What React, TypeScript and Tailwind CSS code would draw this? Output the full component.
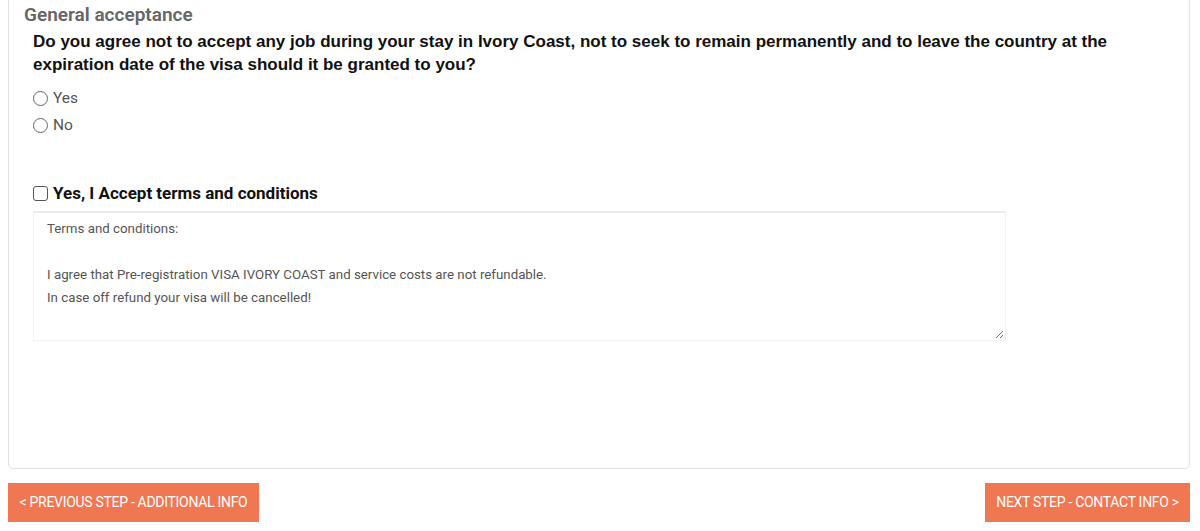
import React from "react";

function Radio({ label }: { label: string }) {
  return (
    <div className="flex items-center h-[27px]">
      <span className="w-[15px] h-[15px] rounded-full border border-[#666] bg-white" />
      <span className="ml-[5px] text-[15.5px] text-[#555] leading-none">{label}</span>
    </div>
  );
}

export default function App() {
  return (
    <div className="w-[1200px] h-[531px] overflow-hidden bg-white" style={{ fontFamily: "Roboto, 'Liberation Sans', sans-serif" }}>
      <div className="pl-2 pr-[10px]">
        <div className="-mt-[10px] border border-[#dde3e6] rounded-[5px] h-[479px] px-[15px] pt-[12px]">
          <div className="text-[19px] leading-[24px] font-semibold text-[#666]">General acceptance</div>
          <div className="pl-[9px]">
            <div
              className="mt-[3px] text-[17px] leading-[23px] font-bold text-[#111] pr-[60px]"
              style={{ fontFamily: "'Liberation Sans', Arial, sans-serif" }}
            >
              Do you agree not to accept any job during your stay in Ivory Coast, not to seek to remain permanently and to leave the country at the expiration date of the visa should it be granted to you?
            </div>
            <div className="mt-[9px]">
              <Radio label="Yes" />
              <Radio label="No" />
            </div>
            <div className="mt-[44px] flex items-center h-[20px]">
              <span className="w-[15px] h-[15px] rounded-[3px] border border-[#555] bg-white" />
              <span className="ml-[5px] text-[17px] font-bold text-[#111] leading-none">Yes, I Accept terms and conditions</span>
            </div>
            <div className="relative mt-[8px] w-[973px] h-[130px] border border-[#f3f3f3] border-t-[2px] border-t-[#ebebeb] pl-[13px] pt-[4px] text-[13.3px] leading-[23.5px] text-[#555]">
              <div>Terms and conditions:</div>
              <div className="h-[22px]" />
              <div>I agree that Pre-registration VISA IVORY COAST and service costs are not refundable.</div>
              <div>In case off refund your visa will be cancelled!</div>
              <svg className="absolute right-[1px] bottom-[1px]" width="10" height="10" viewBox="0 0 10 10">
                <line x1="9" y1="2" x2="2" y2="9" stroke="#777" strokeWidth="1" />
                <line x1="9" y1="6" x2="6" y2="9" stroke="#777" strokeWidth="1" />
              </svg>
            </div>
          </div>
        </div>
        <div className="mt-[14px] flex justify-between">
          <button className="h-[39px] w-[251px] bg-[#ef7751] text-white text-[14px] tracking-[-0.3px] flex items-center justify-center">
            &lt; PREVIOUS STEP - ADDITIONAL INFO
          </button>
          <button className="h-[39px] w-[205px] bg-[#ef7751] text-white text-[14px] tracking-[-0.3px] flex items-center justify-center">
            NEXT STEP - CONTACT INFO &gt;
          </button>
        </div>
      </div>
    </div>
  );
}
